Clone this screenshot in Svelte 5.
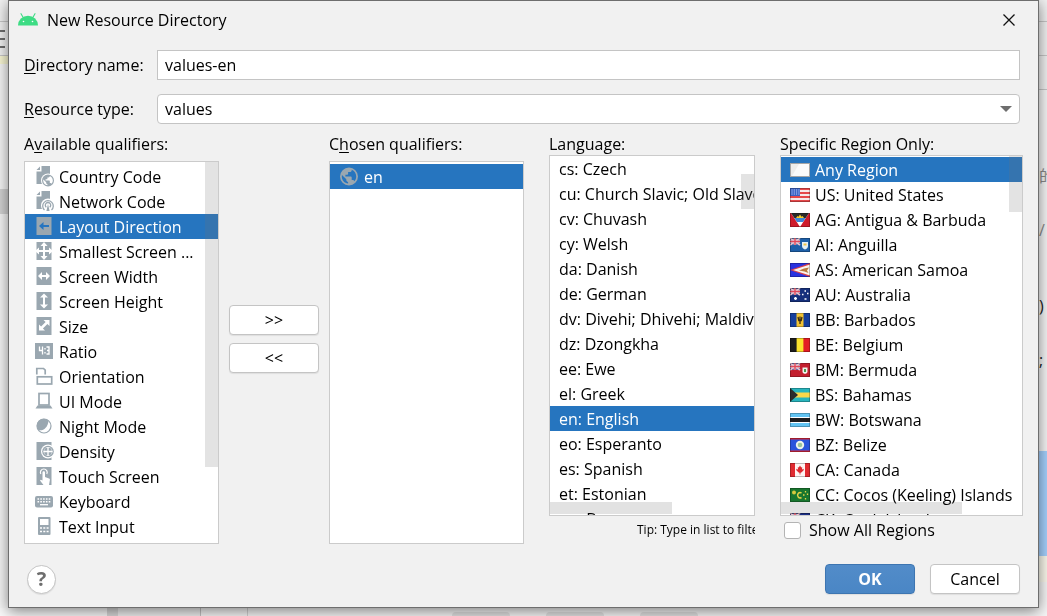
<script>
  const qualifiers = [
    ['country', 'Country Code'],
    ['network', 'Network Code'],
    ['direction', 'Layout Direction'],
    ['smallest', 'Smallest Screen ...'],
    ['width', 'Screen Width'],
    ['height', 'Screen Height'],
    ['size', 'Size'],
    ['ratio', 'Ratio'],
    ['orientation', 'Orientation'],
    ['uimode', 'UI Mode'],
    ['night', 'Night Mode'],
    ['density', 'Density'],
    ['touch', 'Touch Screen'],
    ['keyboard', 'Keyboard'],
    ['textinput', 'Text Input']
  ];
  const languages = [
    'cs: Czech',
    'cu: Church Slavic; Old Slavonic',
    'cv: Chuvash',
    'cy: Welsh',
    'da: Danish',
    'de: German',
    'dv: Divehi; Dhivehi; Maldivian',
    'dz: Dzongkha',
    'ee: Ewe',
    'el: Greek',
    'en: English',
    'eo: Esperanto',
    'es: Spanish',
    'et: Estonian',
    'eu: Basque'
  ];
  const regions = [
    ['', 'Any Region'],
    ['US', 'US: United States'],
    ['AG', 'AG: Antigua & Barbuda'],
    ['AI', 'AI: Anguilla'],
    ['AS', 'AS: American Samoa'],
    ['AU', 'AU: Australia'],
    ['BB', 'BB: Barbados'],
    ['BE', 'BE: Belgium'],
    ['BM', 'BM: Bermuda'],
    ['BS', 'BS: Bahamas'],
    ['BW', 'BW: Botswana'],
    ['BZ', 'BZ: Belize'],
    ['CA', 'CA: Canada'],
    ['CC', 'CC: Cocos (Keeling) Islands'],
    ['CK', 'CK: Cook Islands']
  ];

  let directory = $state('values-en');
  let qualifier = $state('direction');
  let language = $state('en: English');
  let region = $state('');
  let showAll = $state(false);

  const pick = (fn) => (e) => {
    if (e.key === 'Enter' || e.key === ' ') fn();
  };
</script>

{#snippet globe(cx, cy, s)}
  <g transform="translate({cx} {cy}) scale({s})">
    <path
      fill-rule="evenodd"
      d="M0-10A10 10 0 1 0 0 10A10 10 0 1 0 0-10ZM-1 7.9C-5 7.4-8 4.1-8 0c0-.6.1-1.2.2-1.8L-3 3v1c0 1.1.9 2 2 2ZM5.9 5.4C5.6 4.6 4.900 4 4 4H3V1c0-.6-.4-1-1-1h-6v-2h2c.6 0 1-.4 1-1v-2h2c1.100 0 2-.9 2-2v-.4C5.900-6.200 8-3.300 8 0c0 2.100-.8 4-2.100 5.400Z"
    />
  </g>
{/snippet}

{#snippet icon(name)}
  <svg class="icon" viewBox="0 0 20 25" aria-hidden="true">
    {#if name === 'country' || name === 'network'}
      <path d="M6.500 2H15v18H1.500V7.500h5Z" />
      <path d="M5 2.500V6H1.500Z" />
      <circle class="cut" cx="13" cy="16.500" r="7" />
      {#if name === 'country'}
        {@render globe(13, 16.500, 0.6)}
      {:else}
        <g class="line" stroke-width="1.300">
          <path d="M9.500 21a5.300 5.300 0 1 1 7 0" />
          <path d="M11.300 18.300a2.700 2.700 0 1 1 3.400 0" />
        </g>
        <path d="M13 15l1.600 7h-3.200Z" />
      {/if}
    {:else if name === 'direction'}
      <rect x="1.500" y="3" width="15" height="18" />
      <path class="cut" d="M4 12l4.500-4v3H14v2H8.500v3Z" />
    {:else if name === 'smallest'}
      <rect x="1.500" y="3" width="15" height="18" />
      <path
        class="cut"
        d="M9 3l3.500 4H10v4h4V8.500L18 12l-4 3.500V13h-4v4h2.500L9 21l-3.500-4H8v-4H4v2.500L0 12l4-3.500V11h4V7H5.500Z"
      />
    {:else if name === 'width'}
      <rect x="1.500" y="3" width="15" height="18" />
      <path class="cut" d="M3 12l4-4v3h4V8l4 4-4 4v-3H7v3Z" />
    {:else if name === 'height'}
      <rect x="1.500" y="3" width="15" height="18" />
      <path class="cut" d="M9 4.500l4 4h-3v7h3l-4 4-4-4h3v-7H5Z" />
    {:else if name === 'size'}
      <rect x="1.500" y="3" width="15" height="18" />
      <path class="cut" d="M14.500 6v6l-2.100-2.100-4.500 4.500L10 16.500H4v-6l2.100 2.100 4.500-4.500L8.500 6Z" />
    {:else if name === 'ratio'}
      <rect x="0" y="4" width="18" height="16" />
      <path
        d="M4.500 7.500v4h3.500M7.500 7.500v8M10 9v1.500M10 13v1.500M11.500 8H14v7h-2.500M12 11.500h2"
        fill="none"
        stroke="#fff"
        stroke-width="1.300"
      />
    {:else if name === 'orientation'}
      <g class="line" stroke-width="1.700">
        <path d="M1.800 10.500V4.500H8.500l1.700 1.700V10.500" />
        <rect x="2.300" y="12.800" width="14.400" height="7.200" />
      </g>
    {:else if name === 'uimode'}
      <rect class="line" x="4" y="4.500" width="10" height="11.500" stroke-width="1.700" />
      <path d="M2.500 16.500h13l2 3H.5Z" />
    {:else if name === 'night'}
      <circle class="line" cx="9" cy="12" r="7" stroke-width="1.200" />
      <path d="M13.500 6.500a7 7 0 0 0-9.500 0a7 7 0 0 0-.5 9.500c4 1.500 9.500-2 10-9.500Z" />
    {:else if name === 'density'}
      <rect x="1.500" y="3" width="15" height="18" />
      <circle class="cut" cx="13" cy="12.500" r="7" />
      <circle cx="13" cy="12.500" r="5.800" />
      <circle cx="13" cy="12.500" r="4.400" fill="#fff" />
      <circle cx="13" cy="12.500" r="3.900" />
      <path d="M13 8v9M8.500 12.500h9" stroke="#fff" stroke-width="1.300" />
    {:else if name === 'touch'}
      <rect x="1.500" y="3" width="15" height="18" />
      <path class="cut" d="M7.500 8.500c0-1.800 2.500-1.800 2.500 0V13l4 1.500c1 .4 1 1.200.8 2L14 21H8.500L5 16.500l.8-.8 1.700.8Z" />
      <path d="M5.800 10a3.400 3.400 0 1 1 6 0" fill="none" stroke="#fff" stroke-width="1.200" />
    {:else if name === 'keyboard'}
      <rect x="0" y="7" width="18" height="11.500" rx="2" />
      <path d="M2.500 10h13M2.500 12.700h13" stroke="#fff" stroke-width="1.500" stroke-dasharray="1.600 1.200" />
      <path d="M5 15.700h8" stroke="#fff" stroke-width="1.300" />
    {:else if name === 'textinput'}
      <rect x="3" y="3" width="12.500" height="18" rx="1" />
      <rect class="cut" x="5" y="5" width="8.500" height="6" />
      <path d="M5 14h9M5 17.500h9" stroke="#fff" stroke-width="1.600" stroke-dasharray="2 1.300" />
    {:else if name === 'locale'}
      {@render globe(9, 12.500, 0.9)}
    {/if}
  </svg>
{/snippet}

{#snippet jack()}
  <path d="M0 0l10 7M10 0L0 7" stroke="#e8c3cc" stroke-width="1.800" />
  <path d="M5 0v7M0 3.500h10" stroke="#f0d8dd" stroke-width="2.600" />
  <path d="M5 0v7M0 3.500h10" stroke="#e0485a" stroke-width="1.400" />
{/snippet}

{#snippet flag(code)}
  <svg class="flag" viewBox="0 0 20 14" aria-hidden="true">
    {#if code === 'US'}
      <rect width="20" height="14" fill="#f6e9e9" />
      <path d="M0 1h20M0 5h20M0 9h20M0 13h20" stroke="#e5484a" stroke-width="2" />
      <rect width="10" height="8" fill="#3a62c4" />
      <path d="M1.500 2h8M1.500 4h8M1.500 6h8" stroke="#cfdcff" stroke-dasharray="1 1.300" />
    {:else if code === 'AG'}
      <rect width="20" height="14" fill="#cf1c2c" />
      <path d="M1 0h18l-9 14Z" fill="#fff" />
      <path d="M1 0h18l-3.300 5H4.300Z" fill="#2a2a2a" />
      <path d="M6 5l1.500-2 1 .8L10 1.500l1.500 2.300 1-.8L14 5Z" fill="#f5d02a" />
      <path d="M4.300 5h11.400l-2.600 4H6.900Z" fill="#3f86d8" />
    {:else if code === 'AI'}
      <rect width="20" height="14" fill="#1d5fa8" />
      {@render jack()}
      <path d="M12 4h6v4c0 2-1.500 3-3 3.500-1.500-.5-3-1.500-3-3.500Z" fill="#e4f0f4" />
      <path d="M13.500 5.500h3v2h-3Z" fill="#f0c44a" />
    {:else if code === 'AS'}
      <rect width="20" height="14" fill="#2a32e0" />
      <path d="M0 7L20 0v14Z" fill="#d8404a" />
      <path d="M3 7l17-5.500v11Z" fill="#fbf3ee" />
      <path d="M9 7.500l5-2 5-1-2 3 1.500 2.500-4-1.500Z" fill="#b9793c" />
    {:else if code === 'AU'}
      <rect width="20" height="14" fill="#16307c" />
      {@render jack()}
      <path d="M4 10.500h3M5.500 9v3M14.500 3h1.500M14.500 11h2M12 6.500h1.500M17 5.500h1.500" stroke="#fff" stroke-width="1.500" />
    {:else if code === 'BB'}
      <rect width="20" height="14" fill="#173f9c" />
      <rect x="6.500" width="7" height="14" fill="#f3c433" />
      <path d="M8 4l.8 3.500h2.400L12 4M10 3.500V11" fill="none" stroke="#3a2c10" stroke-width="1.300" />
    {:else if code === 'BE'}
      <rect width="20" height="14" fill="#fbe22d" />
      <rect width="6.600" height="14" fill="#1d1d1d" />
      <rect x="13.400" width="6.600" height="14" fill="#e31c24" />
    {:else if code === 'BM'}
      <rect width="20" height="14" fill="#c31f2e" />
      <rect width="10" height="7" fill="#34489c" />
      {@render jack()}
      <path d="M12.500 4.500h5v4c0 1.500-1.200 2-2.500 2.500-1.300-.5-2.500-1-2.500-2.500Z" fill="#f0f2ee" />
      <path d="M14 6h2v3h-2Z" fill="#4b9a4e" />
    {:else if code === 'BS'}
      <rect width="20" height="14" fill="#28b5bd" />
      <rect y="4.500" width="20" height="5" fill="#fbd84a" />
      <path d="M0 0l8 7-8 7Z" fill="#2b2b2b" />
    {:else if code === 'BW'}
      <rect width="20" height="14" fill="#62c4f2" />
      <rect y="4" width="20" height="6" fill="#fff" />
      <rect y="5" width="20" height="4" fill="#1c1c1c" />
    {:else if code === 'BZ'}
      <rect width="20" height="14" fill="#2a55dc" />
      <path d="M0 .7h20M0 13.300h20" stroke="#d7263a" stroke-width="1.400" />
      <circle cx="10" cy="7" r="4.200" fill="#eef4ea" />
      <circle cx="10" cy="7" r="2.300" fill="#9cc49a" />
    {:else if code === 'CA'}
      <rect width="20" height="14" fill="#fdf3f2" />
      <path d="M0 0h5v14H0ZM15 0h5v14h-5Z" fill="#e02a30" />
      <path d="M10 2.500l1.200 2 1-.5-.2 2.500 1.800-.8-.3 1.800-2.500 2.200h-.6V11.500h-.8V9.700H9L6.500 7.500l-.3-1.800 1.800.8L7.800 4l1 .5Z" fill="#dc2a30" />
    {:else if code === 'CC'}
      <rect width="20" height="14" fill="#18762f" />
      <circle cx="4" cy="4.500" r="2" fill="#d6c93e" />
      <path d="M11.500 5a2.600 2.600 0 1 0 0 4.500" fill="none" stroke="#e3d347" stroke-width="1.500" />
      <path d="M15.500 3v1.500M15.500 10v1.500M13 7h1.500M17.500 5.500V7" stroke="#e3d347" stroke-width="1.300" />
    {:else if code === 'CK'}
      <rect width="20" height="14" fill="#1c2f86" />
      {@render jack()}
      <circle cx="15" cy="7" r="3" fill="none" stroke="#fff" />
    {:else}
      <rect width="20" height="14" fill="#ededec" />
      <path d="M2 13L9 1h10v12Z" fill="#fafafa" />
    {/if}
    <rect
      x=".5"
      y=".5"
      width="19"
      height="13"
      fill="none"
      stroke={code ? '#000' : '#a5a5a5'}
      stroke-opacity={code ? 0.25 : 1}
    />
  </svg>
{/snippet}

<div class="page">
  <div class="edge left" aria-hidden="true">
    <i class="bar"></i><i class="tool"><b></b><b></b><b></b></i><i class="note"></i><i class="blank"></i><i class="mark"></i>
  </div>

  <div class="dialog" role="dialog" aria-labelledby="title">
    <header>
      <svg class="logo" viewBox="0 0 20 13" aria-hidden="true">
        <path d="M0 12.500a10 9.800 0 0 1 20 0Z" fill="#3ddc84" />
        <path d="M5.500 5L3 .7M14.500 5L17 .7" stroke="#3ddc84" stroke-width="1.100" stroke-linecap="round" />
        <circle cx="5.500" cy="8.500" r=".8" fill="#fff" /><circle cx="14.500" cy="8.500" r=".8" fill="#fff" />
      </svg>
      <h1 id="title">New Resource Directory</h1>
      <button class="close" aria-label="Close">
        <svg viewBox="0 0 12 12"><path d="M.5.5l11 11M11.500.5l-11 11" stroke="#111" stroke-width="1.300" /></svg>
      </button>
    </header>

    <div class="fields">
      <label for="dir"><u>D</u>irectory name:</label>
      <input id="dir" type="text" bind:value={directory} />
      <label for="type"><u>R</u>esource type:</label>
      <div class="combo">
        <select id="type"><option>values</option></select>
        <svg viewBox="0 0 12 6" aria-hidden="true"><path d="M0 0h12L6 6Z" fill="#6e6e6e" /></svg>
      </div>
    </div>

    <main>
      <div class="transfer">
        <section>
          <h2 class="low" id="avail">A<u>v</u>ailable qualifiers:</h2>
          <div class="box">
            <ul class="padded" role="listbox" aria-labelledby="avail">
              {#each qualifiers as [id, label]}
                <li
                  role="option"
                  tabindex="0"
                  aria-selected={qualifier === id}
                  onclick={() => (qualifier = id)}
                  onkeydown={pick(() => (qualifier = id))}
                >
                  {@render icon(id)}{label}
                </li>
              {/each}
            </ul>
            <span class="thumb v avail"></span>
          </div>
        </section>
        <div class="moves">
          <button>&gt;&gt;</button>
          <button>&lt;&lt;</button>
        </div>
        <section>
          <h2 class="low" id="chosen">C<u>h</u>osen qualifiers:</h2>
          <div class="box">
            <ul class="padded" role="listbox" aria-labelledby="chosen">
              <li role="option" tabindex="0" aria-selected="true">{@render icon('locale')}en</li>
            </ul>
          </div>
        </section>
      </div>

      <section class="lang">
        <h2 id="lang">Language:</h2>
        <div class="box">
          <ul role="listbox" aria-labelledby="lang">
            {#each languages as item}
              <li
                role="option"
                tabindex="0"
                aria-selected={language === item}
                onclick={() => (language = item)}
                onkeydown={pick(() => (language = item))}
              >
                {item}
              </li>
            {/each}
          </ul>
          <span class="thumb v lang-v"></span>
          <span class="thumb h lang-h"></span>
        </div>
        <p class="tip">Tip: Type in list to filter</p>
      </section>

      <section class="region">
        <h2 id="region">Specific Region Only:</h2>
        <div class="box">
          <ul class="flags" role="listbox" aria-labelledby="region">
            {#each regions as [code, label]}
              <li
                role="option"
                tabindex="0"
                aria-selected={region === code}
                onclick={() => (region = code)}
                onkeydown={pick(() => (region = code))}
              >
                {@render flag(code)}{label}
              </li>
            {/each}
          </ul>
          <span class="thumb v region-v"></span>
          <span class="thumb h region-h"></span>
        </div>
        <label class="check"><input type="checkbox" bind:checked={showAll} />Show All Regions</label>
      </section>
    </main>

    <footer>
      <button class="help" aria-label="Help">?</button>
      <button class="ok">OK</button>
      <button>Cancel</button>
    </footer>
  </div>

  <div class="edge right" aria-hidden="true">
    <i class="r1"></i><i class="r2"></i><i class="r3"></i>
    <i class="code"><span>的</span><span>/</span><span class="dark">)</span><span class="dark">;</span></i>
    <i class="sel"></i><i class="warm"></i>
  </div>
  <div class="edge bottom" aria-hidden="true">
    <i class="b1"></i><i class="b2"></i><i class="b3"></i><i class="b4"></i>
    <i class="chips"><b></b><b></b><b></b></i>
  </div>
</div>

<style>
  :global(body) {
    margin: 0;
    background: #f5f5f5;
  }
  .page,
  .page * {
    box-sizing: border-box;
  }
  .page {
    display: grid;
    grid-template-columns: 8px minmax(0, 1fr) 8px;
    grid-template-rows: minmax(0, 1fr) 8px;
    height: 100vh;
    min-height: 480px;
    overflow: hidden;
    font: 16px/20px 'Open Sans', 'Noto Sans CJK SC', sans-serif;
    color: #000;
  }
  .dialog {
    display: flex;
    flex-direction: column;
    z-index: 1;
    padding: 0 15px 13px;
    background: #f1f1f1;
    border: 1px solid #6e6e6e;
    box-shadow: 0 3px 14px rgba(0, 0, 0, 0.5);
  }
  header {
    display: flex;
    align-items: center;
    height: 37px;
    margin-left: -6px;
    padding-right: 8px;
  }
  .logo {
    width: 20px;
    height: 13px;
    margin-right: 9px;
  }
  h1,
  h2 {
    margin: 0;
    font-size: inherit;
    font-weight: 400;
    white-space: nowrap;
  }
  h1 {
    flex: 1;
  }
  u {
    text-underline-offset: 2px;
  }
  button {
    width: 90px;
    height: 30px;
    padding: 0;
    border: 1px solid #c4c4c4;
    border-radius: 4px;
    background: #fff;
    box-shadow: 0 1px 1px rgba(0, 0, 0, 0.08);
    font: inherit;
    color: inherit;
  }
  .close {
    display: flex;
    width: 12px;
    height: 12px;
    border: 0;
    border-radius: 0;
    background: none;
    box-shadow: none;
  }
  .close svg {
    width: 12px;
    height: 12px;
  }
  .fields {
    display: grid;
    grid-template-columns: 133px minmax(0, 1fr);
    gap: 14px 0;
    align-items: center;
    margin-top: 12px;
    padding-right: 3px;
  }
  .fields input,
  .fields select {
    display: block;
    width: 100%;
    height: 30px;
    padding: 0 7px;
    border: 1px solid #c4c4c4;
    border-radius: 0;
    background: #fff;
    color: #000;
    font: inherit;
    outline: 0;
    appearance: none;
  }
  .fields select {
    border-radius: 4px;
  }
  .combo {
    position: relative;
  }
  .combo svg {
    position: absolute;
    right: 8px;
    top: 12px;
    width: 12px;
    height: 6px;
    pointer-events: none;
  }
  main {
    display: flex;
    flex: 1;
    gap: 25px;
    min-height: 0;
    margin-top: 10px;
  }
  .transfer {
    display: flex;
    flex: 500 1 0;
    gap: 10px;
    min-width: 0;
  }
  section {
    display: flex;
    flex: 1 1 0;
    flex-direction: column;
    min-width: 0;
    min-height: 0;
  }
  .lang {
    flex-grow: 206;
  }
  .region {
    flex-grow: 243;
  }
  h2 {
    height: 21px;
    line-height: 21px;
  }
  .low {
    margin-bottom: 6px;
  }
  .moves {
    display: flex;
    flex-direction: column;
    justify-content: center;
    gap: 8px;
  }
  .box {
    position: relative;
    flex: 1;
    min-height: 0;
    overflow: hidden;
    border: 1px solid #cbcbcb;
    background: #fff;
  }
  ul {
    margin: 0;
    padding: 0;
    list-style: none;
  }
  .padded {
    padding-top: 2px;
  }
  .flags {
    padding-top: 1px;
  }
  li {
    display: flex;
    align-items: center;
    height: 25px;
    padding-left: 9px;
    white-space: nowrap;
    outline: 0;
    --cut: #fff;
  }
  li[aria-selected='true'] {
    background: #2675bf;
    color: #fff;
    --cut: #2675bf;
  }
  .icon {
    flex: none;
    width: 20px;
    height: 25px;
    margin: 0 4px 0 1px;
    fill: #9aa7b0;
  }
  .icon .cut {
    fill: var(--cut);
  }
  .icon .line {
    fill: none;
    stroke: #9aa7b0;
  }
  .flag {
    flex: none;
    width: 20px;
    height: 14px;
    margin-right: 5px;
  }
  .thumb {
    position: absolute;
    background: rgba(115, 115, 115, 0.2);
    pointer-events: none;
  }
  .v {
    right: 0;
    width: 13px;
  }
  .h {
    left: 0;
    bottom: 1px;
    height: 12px;
    background: #e2e2e2;
    mix-blend-mode: multiply;
  }
  .avail {
    top: 0;
    height: 80%;
  }
  .lang-v {
    top: 18px;
    height: 35px;
  }
  .lang-h {
    width: 60%;
  }
  .region-v {
    top: 0;
    height: 56px;
  }
  .region-h {
    width: 75%;
  }
  .tip {
    height: 28px;
    margin: 0;
    padding-left: 88px;
    overflow: hidden;
    font-size: 12px;
    line-height: 28px;
    white-space: nowrap;
  }
  .check {
    display: flex;
    align-items: center;
    gap: 8px;
    height: 28px;
    padding-left: 4px;
  }
  .check input {
    width: 17px;
    height: 17px;
    margin: 0;
    border: 1px solid #b4b4b4;
    border-radius: 3px;
    background: #fff;
    appearance: none;
  }
  .check input:checked {
    background: #4a88c7;
  }
  footer {
    display: flex;
    align-items: center;
    gap: 15px;
    margin-top: 20px;
    padding: 0 3px;
  }
  .help {
    width: 29px;
    height: 29px;
    margin-right: auto;
    border-radius: 50%;
    font-size: 20px;
    font-weight: 700;
    line-height: 24px;
    color: #6e6e6e;
  }
  .ok {
    border-color: #3d75b1;
    background: linear-gradient(#528cc9, #4a86c5);
    color: #fff;
    font-weight: 700;
  }

  .edge {
    display: flex;
    overflow: hidden;
    background: #f7f7f7;
  }
  .edge i {
    display: block;
    flex: none;
    font-style: normal;
  }
  .left,
  .right {
    flex-direction: column;
  }
  .bar,
  .r1 {
    height: 22px;
    border-bottom: 1px solid #c8c8c8;
    background: #f2f2f2;
  }
  .tool {
    height: 34px;
    padding-top: 8px;
    border-bottom: 1px solid #c8c8c8;
    background: #f2f2f2;
  }
  .tool b {
    display: block;
    width: 5px;
    height: 2px;
    margin-bottom: 6px;
    background: #6e6e6e;
  }
  .note {
    height: 8px;
    background: #faf8d4;
  }
  .blank {
    height: 125px;
  }
  .mark {
    height: 25px;
    background: #d4d4d4;
  }
  .r2,
  .r3 {
    height: 34px;
    border-bottom: 1px solid #c8c8c8;
    background: #f2f2f2;
  }
  .code {
    height: 361px;
    padding-top: 74px;
    color: #8c8c8c;
  }
  .code span {
    display: block;
    height: 54px;
    line-height: 24px;
  }
  .code span:nth-child(2) {
    height: 76px;
  }
  .code .dark {
    color: #222;
  }
  .sel {
    height: 105px;
    background: #a6d2ff;
  }
  .warm {
    height: 26px;
    background: #fcfaed;
  }
  .bottom {
    grid-column: 1 / -1;
  }
  .b1 {
    width: 107px;
    background: #fafafa;
  }
  .b2 {
    width: 11px;
    background: #d8d8d8;
  }
  .b3 {
    width: 83px;
    border-right: 1px solid #c4c4c4;
    background: #f0f0f0;
  }
  .b4 {
    width: 47px;
    border-right: 1px solid #d4d4d4;
  }
  .edge .chips {
    display: flex;
    gap: 36px;
    padding: 4px 0 0 204px;
  }
  .chips b {
    width: 58px;
    height: 8px;
    border-radius: 4px 4px 0 0;
    background: #e2e2e2;
  }
</style>
